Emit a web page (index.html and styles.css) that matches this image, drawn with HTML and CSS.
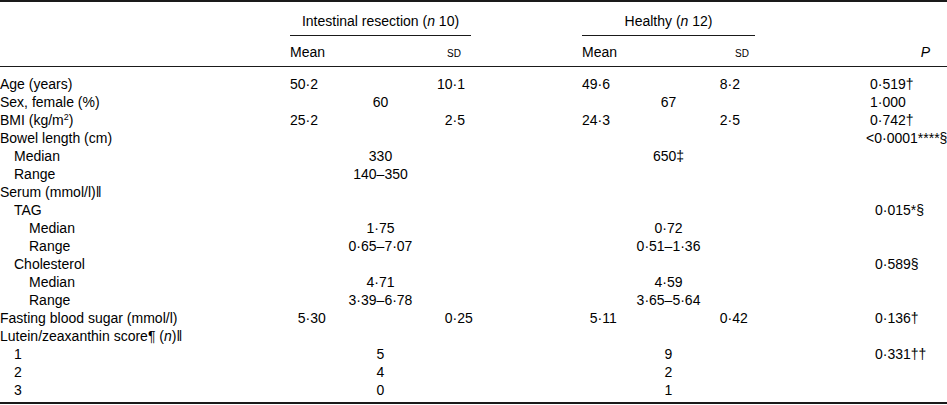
FILE: index.html
```html
<!DOCTYPE html>
<html lang="en">
<head>
<meta charset="utf-8">
<title>Characteristics of participants</title>
<link rel="stylesheet" href="styles.css">
</head>
<body>
<table class="data">
  <colgroup>
    <col class="c-label">
    <col class="c-imean">
    <col class="c-isd">
    <col class="c-gap">
    <col class="c-hmean">
    <col class="c-hsd">
    <col class="c-p">
  </colgroup>
  <thead>
    <tr class="groups">
      <th></th>
      <th colspan="2" class="group">Intestinal resection (<i>n</i> 10)</th>
      <th></th>
      <th colspan="2" class="group">Healthy (<i>n</i> 12)</th>
      <th></th>
    </tr>
    <tr class="subs">
      <th></th>
      <th>Mean</th>
      <th class="sd-i"><span class="sc">sd</span></th>
      <th></th>
      <th>Mean</th>
      <th class="sd-h"><span class="sc">sd</span></th>
      <th class="p-head"><i>P</i></th>
    </tr>
  </thead>
  <tbody>
    <tr>
      <td>Age (years)</td>
      <td class="num"><span class="i">50</span>·2</td>
      <td class="num"><span class="i">10</span>·1</td>
      <td></td>
      <td class="num"><span class="i">49</span>·6</td>
      <td class="num"><span class="i">8</span>·2</td>
      <td class="p">0·519†</td>
    </tr>
    <tr>
      <td>Sex, female (%)</td>
      <td colspan="2" class="ctr">60</td>
      <td></td>
      <td colspan="2" class="ctr">67</td>
      <td class="p">1·000</td>
    </tr>
    <tr>
      <td>BMI (kg/m<sup>2</sup>)</td>
      <td class="num"><span class="i">25</span>·2</td>
      <td class="num"><span class="i">2</span>·5</td>
      <td></td>
      <td class="num"><span class="i">24</span>·3</td>
      <td class="num"><span class="i">2</span>·5</td>
      <td class="p">0·742†</td>
    </tr>
    <tr>
      <td>Bowel length (cm)</td>
      <td colspan="2"></td>
      <td></td>
      <td colspan="2"></td>
      <td class="p p-wide">&lt;0·0001****§</td>
    </tr>
    <tr>
      <td class="ind1">Median</td>
      <td colspan="2" class="ctr">330</td>
      <td></td>
      <td colspan="2" class="ctr">650‡</td>
      <td></td>
    </tr>
    <tr>
      <td class="ind1">Range</td>
      <td colspan="2" class="ctr">140–350</td>
      <td></td>
      <td colspan="2"></td>
      <td></td>
    </tr>
    <tr>
      <td>Serum (mmol/l)‖</td>
      <td colspan="2"></td>
      <td></td>
      <td colspan="2"></td>
      <td></td>
    </tr>
    <tr>
      <td class="ind1">TAG</td>
      <td colspan="2"></td>
      <td></td>
      <td colspan="2"></td>
      <td class="p p-late">0·015*§</td>
    </tr>
    <tr>
      <td class="ind2">Median</td>
      <td colspan="2" class="ctr">1·75</td>
      <td></td>
      <td colspan="2" class="ctr">0·72</td>
      <td></td>
    </tr>
    <tr>
      <td class="ind2">Range</td>
      <td colspan="2" class="ctr">0·65–7·07</td>
      <td></td>
      <td colspan="2" class="ctr">0·51–1·36</td>
      <td></td>
    </tr>
    <tr>
      <td class="ind1">Cholesterol</td>
      <td colspan="2"></td>
      <td></td>
      <td colspan="2"></td>
      <td class="p p-late">0·589§</td>
    </tr>
    <tr>
      <td class="ind2">Median</td>
      <td colspan="2" class="ctr">4·71</td>
      <td></td>
      <td colspan="2" class="ctr">4·59</td>
      <td></td>
    </tr>
    <tr>
      <td class="ind2">Range</td>
      <td colspan="2" class="ctr">3·39–6·78</td>
      <td></td>
      <td colspan="2" class="ctr">3·65–5·64</td>
      <td></td>
    </tr>
    <tr>
      <td>Fasting blood sugar (mmol/l)</td>
      <td class="num"><span class="i">5</span>·30</td>
      <td class="num"><span class="i">0</span>·25</td>
      <td></td>
      <td class="num"><span class="i">5</span>·11</td>
      <td class="num"><span class="i">0</span>·42</td>
      <td class="p p-late">0·136†</td>
    </tr>
    <tr>
      <td>Lutein/zeaxanthin score¶ (<i>n</i>)‖</td>
      <td colspan="2"></td>
      <td></td>
      <td colspan="2"></td>
      <td></td>
    </tr>
    <tr>
      <td class="ind1">1</td>
      <td colspan="2" class="ctr">5</td>
      <td></td>
      <td colspan="2" class="ctr">9</td>
      <td class="p p-late">0·331††</td>
    </tr>
    <tr>
      <td class="ind1">2</td>
      <td colspan="2" class="ctr">4</td>
      <td></td>
      <td colspan="2" class="ctr">2</td>
      <td></td>
    </tr>
    <tr>
      <td class="ind1">3</td>
      <td colspan="2" class="ctr">0</td>
      <td></td>
      <td colspan="2" class="ctr">1</td>
      <td></td>
    </tr>
  </tbody>
</table>
</body>
</html>
```

FILE: styles.css
```css
html, body {
  margin: 0;
  padding: 0;
  background: #ffffff;
}

body {
  color: #000000;
  font-family: "Liberation Sans", Arial, sans-serif;
  font-size: 14px;
}

.data {
  width: 947px;
  table-layout: fixed;
  border-collapse: separate;
  border-spacing: 0;
  border-top: 2px solid #1a1a1a;
  border-bottom: 2px solid #1a1a1a;
}

.c-label { width: 290px; }
.c-imean { width: 147px; }
.c-isd { width: 34px; }
.c-gap { width: 111px; }
.c-hmean { width: 130px; }
.c-hsd { width: 43px; }
.c-p { width: 192px; }

.data th,
.data td {
  padding: 0;
  line-height: 18px;
  font-weight: normal;
  text-align: left;
  vertical-align: top;
  white-space: nowrap;
  overflow: visible;
}

.groups th {
  padding: 10px 0 5px;
}

.groups .group {
  text-align: center;
  border-bottom: 1px solid #1a1a1a;
}

.subs th {
  padding: 7px 0 5px;
  border-bottom: 1px solid #1a1a1a;
}

.subs .sd-i { padding-left: 10px; }
.subs .sd-h { padding-left: 23px; }

.subs .p-head {
  text-align: right;
  padding-right: 17px;
}

.sc {
  font-variant: small-caps;
}

tbody tr:first-child td { padding-top: 8px; }
tbody tr:last-child td { padding-bottom: 3px; }

.ind1 { padding-left: 14px !important; }
.ind2 { padding-left: 29px !important; }

.num .i {
  display: inline-block;
  width: 1.112em;
  text-align: right;
}

.ctr { text-align: center !important; }

.p { padding-left: 115px !important; }
.p-wide { padding-left: 111px !important; }
.p-late { padding-left: 120px !important; }

sup {
  font-size: 9px;
  line-height: 0;
  vertical-align: 5px;
}
```
